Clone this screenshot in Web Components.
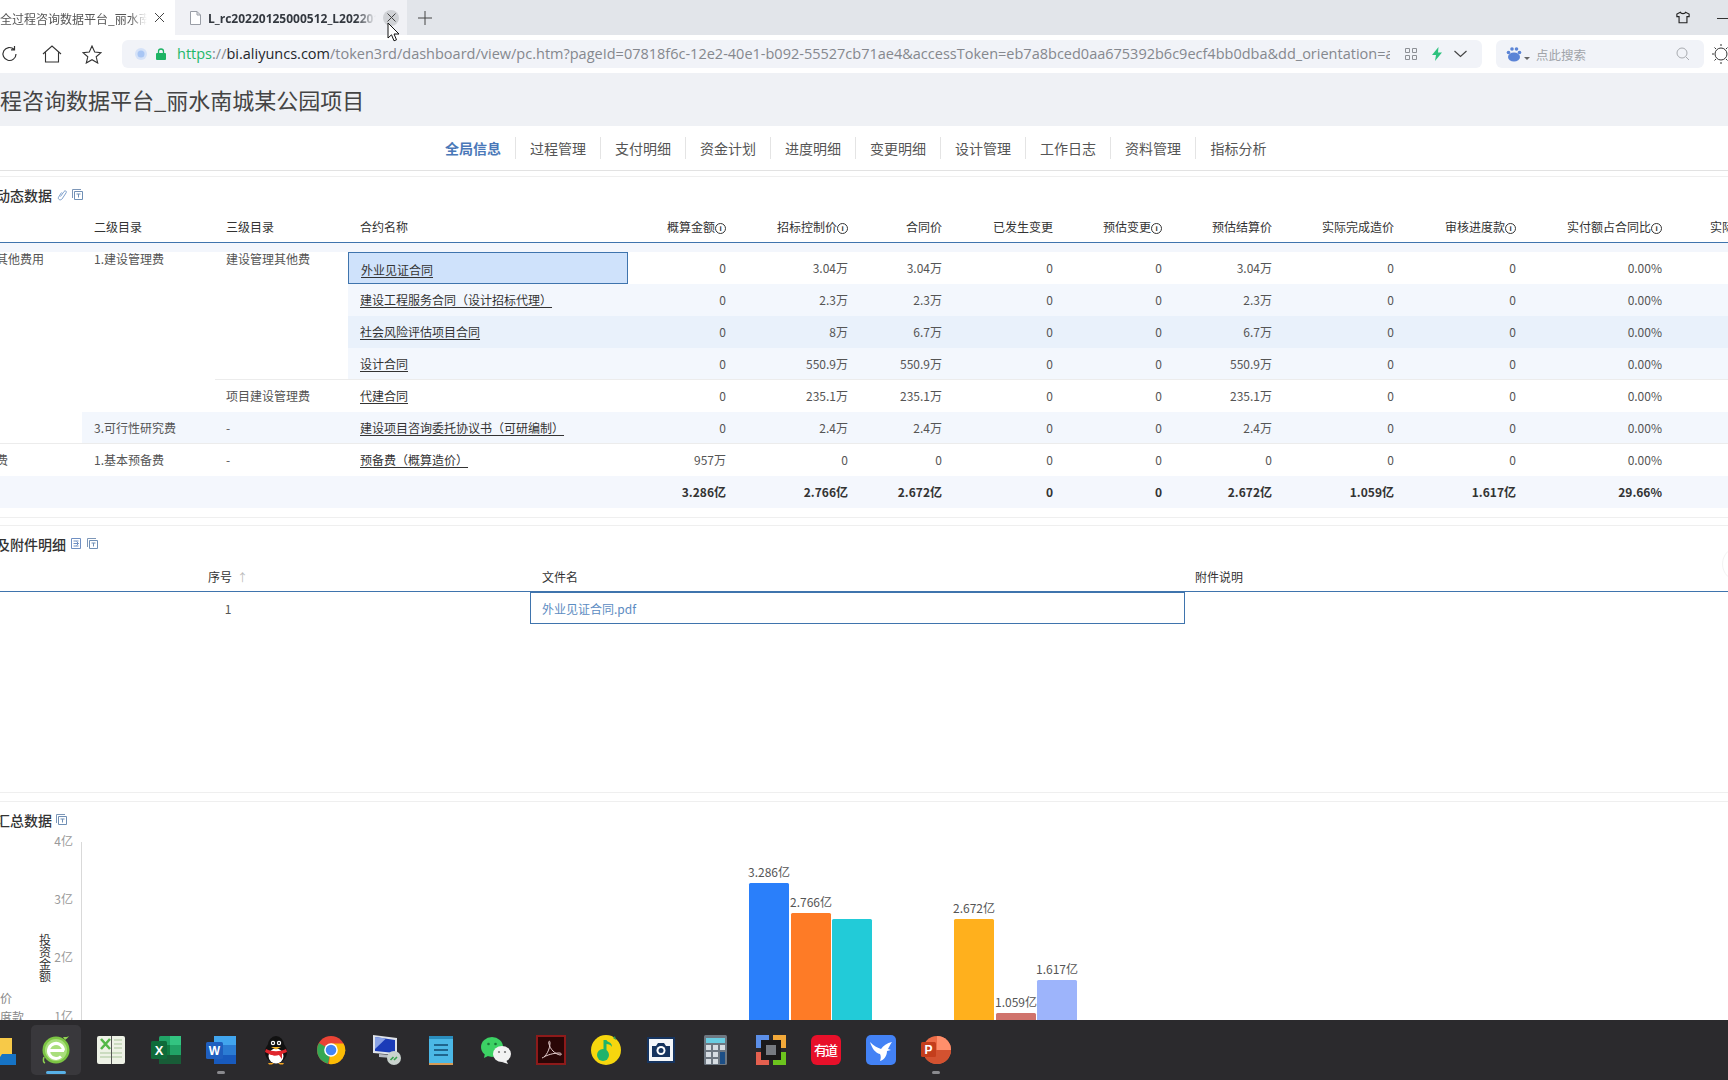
<!DOCTYPE html>
<html lang="zh">
<head>
<meta charset="utf-8">
<title>全过程咨询数据平台_丽水南城某公园项目</title>
<style>
html, body { margin: 0; height: 100%; overflow: hidden; background: #fff; }
body { font-family: "Noto Sans CJK SC", "Noto Sans", sans-serif; }
</style>
</head>
<body>
<desk-top>
    <tab-strip></tab-strip>
    <tool-bar></tool-bar>
    <page-title>程咨询数据平台_丽水南城某公园项目</page-title>
    <nav-tabs></nav-tabs>
    <data-panel height="342" first>
        <panel-head label="动态数据" pad="5" gap="5" icons="link copy"></panel-head>
        <cost-table></cost-table>
    </data-panel>
    <data-panel height="268" top="7">
        <panel-head label="及附件明细" pad="5" gap="6" icons="fold copy"></panel-head>
        <file-table></file-table>
    </data-panel>
    <data-panel height="240" top="8" open>
        <panel-head label="汇总数据" pad="4" gap="6" icons="copy"></panel-head>
        <bar-chart></bar-chart>
    </data-panel>
    <task-bar slot="bottom"></task-bar>
</desk-top>

<script>
const deskTemplate = document.createElement("template");
deskTemplate.innerHTML = `
    <style>
        :host { display: grid; grid-template-rows: 1fr 60px; width: 1728px; height: 1080px; overflow: hidden; }
        .main { overflow: hidden; min-height: 0; }
    </style>
    <div class="main"><slot></slot></div>
    <slot name="bottom"></slot>
`;
class DeskTop extends HTMLElement {
    constructor() {
        super();
        this.attachShadow({ mode: "open" });
        this.shadowRoot.appendChild(deskTemplate.content.cloneNode(true));
    }
}
customElements.define("desk-top", DeskTop);

const tabTemplate = document.createElement("template");
tabTemplate.innerHTML = `
    <style>
        :host { display: flex; height: 35px; background: #e2e5ea; position: relative; font-size: 12px; line-height: 35px; }
        .tab { display: flex; align-items: center; height: 35px; box-sizing: border-box; }
        .one { width: 175px; background: #fff; color: #555; padding-right: 10px; }
        .two { width: 232px; background: #f0f1f5; padding-left: 15px; color: #33383f; font-weight: 700; font-family: "Open Sans", "Noto Sans", sans-serif; }
        .label { flex: 1; overflow: hidden; white-space: nowrap; padding-top: 2px; -webkit-mask-image: linear-gradient(90deg, #000 88%, transparent); mask-image: linear-gradient(90deg, #000 88%, transparent); }
        .one .label { margin-right: 7px; }
        .two .label { margin: 0 7px 0 7px; }
        .x { width: 11px; height: 11px; flex: none; }
        .two .round { width: 16px; height: 16px; border-radius: 50%; background: #d0d2d6; display: flex; align-items: center; justify-content: center; margin-right: 8px; flex: none; }
        .plus { margin-left: 11px; align-self: center; }
        .right { margin-left: auto; display: flex; align-items: center; gap: 27px; }
        .cursor { position: absolute; left: 387px; top: 22px; }
    </style>
    <div class="tab one">
        <span class="label">全过程咨询数据平台_丽水南</span>
        <svg class="x" viewBox="0 0 11 11"><path d="M1 1l9 9M10 1l-9 9" stroke="#444" fill="none"/></svg>
    </div>
    <div class="tab two">
        <svg width="11" height="14" viewBox="0 0 11 14"><path d="M.5.5h6.500l3.500 3.500v9.500h-10zM7 .5v3.500h3.500" fill="#fff" stroke="#9a9ea6"/></svg>
        <span class="label">L_rc20220125000512_L20220125</span>
        <span class="round"><svg width="9" height="9" viewBox="0 0 9 9"><path d="M.5.5l8 8M8.500.5l-8 8" stroke="#444" fill="none"/></svg></span>
    </div>
    <svg class="plus" width="14" height="14" viewBox="0 0 14 14"><path d="M7 0v14M0 7h14" stroke="#444" fill="none"/></svg>
    <div class="right">
        <svg width="14" height="13" viewBox="0 0 16 14"><path d="M5 1L1 3v3h2.500v7h9V6H15V3l-4-2c-.5 2-5.500 2-6 0z" fill="none" stroke="#222" stroke-width="1.300"/></svg>
        <svg width="16" height="14" viewBox="0 0 16 14" style="margin-right:-5px"><path d="M0 7.500h16" stroke="#333"/></svg>
    </div>
    <svg class="cursor" width="13" height="20" viewBox="0 0 13 20"><path d="M1 1v15l3.500-3.200 2.500 6 2.500-1-2.500-5.800H12z" fill="#fff" stroke="#111"/></svg>
`;
class TabStrip extends HTMLElement {
    constructor() {
        super();
        this.attachShadow({ mode: "open" });
        this.shadowRoot.appendChild(tabTemplate.content.cloneNode(true));
    }
}
customElements.define("tab-strip", TabStrip);

const toolTemplate = document.createElement("template");
toolTemplate.innerHTML = `
    <style>
        :host { display: flex; align-items: center; height: 38px; background: #fff; padding: 0 0 0 1px; box-sizing: border-box; }
        .btn { flex: none; display: block; }
        .addr { width: 1360px; height: 28px; margin-left: 20px; background: #f1f3f8; border-radius: 6px; display: flex; align-items: center; padding-left: 13px; box-sizing: border-box; flex: none; }
        .url { width: 1213px; flex: none; overflow: hidden; white-space: nowrap; font: 14.500px/28px "Open Sans", "Noto Sans", sans-serif; color: #85888e; margin-left: 11px; }
        .url b { font-weight: 400; color: #1fb86a; }
        .url i { font-style: normal; color: #23262b; }
        .search { width: 208px; height: 28px; margin-left: 14px; background: #f1f3f8; border-radius: 6px; display: flex; align-items: center; padding-left: 10px; box-sizing: border-box; flex: none; font-size: 12.500px; color: #a0a3a9; }
    </style>
    <svg class="btn" width="18" height="18" viewBox="0 0 18 18"><path d="M15 9a6.500 6.500 0 1 1-2-4.700M13.500 1v3.800H10" fill="none" stroke="#333" stroke-width="1.200"/></svg>
    <svg class="btn" style="margin-left:23px" width="20" height="18" viewBox="0 0 20 18"><path d="M1 9l9-8 9 8M3.500 7.500V17h13V7.500" fill="none" stroke="#333" stroke-width="1.100"/></svg>
    <svg class="btn" style="margin-left:20px" width="20" height="19" viewBox="0 0 20 19"><path d="M10 1l2.700 6 6.300.6-4.800 4.200 1.500 6.200L10 14.700 4.300 18l1.500-6.200L1 7.600 7.300 7z" fill="none" stroke="#333" stroke-width="1.100"/></svg>
    <div class="addr">
        <svg width="12" height="12" viewBox="0 0 12 12"><circle cx="6" cy="6" r="6" fill="#d5e2f8"/><circle cx="6" cy="6" r="3.500" fill="#a9c6f4"/></svg>
        <svg style="margin-left:9px" width="10" height="12" viewBox="0 0 10 12"><path d="M2.500 5V3.500a2.500 2.500 0 0 1 5 0V5" fill="none" stroke="#1db364" stroke-width="1.300"/><rect y="5" width="10" height="7" rx="1" fill="#1db364"/></svg>
        <div class="url"><b>https</b>://<i>bi.aliyuncs.com</i>/token3rd/dashboard/view/pc.htm?pageId=07818f6c-12e2-40e1-b092-55527cb71ae4&amp;accessToken=eb7a8bced0aa675392b6c9ecf4bb0dba&amp;dd_orientation=auto</div>
        <svg style="margin-left:15px" width="12" height="12" viewBox="0 0 12 12"><path d="M.5.500h4v4h-4zM7.500.500h4v4h-4zM.5 7.500h4v4h-4zM7.500 7.500h4v4h-4z" fill="none" stroke="#8d9096"/></svg>
        <svg style="margin-left:15px" width="10" height="14" viewBox="0 0 10 14"><path d="M6.500 0L0 8h4l-1 6 7-8.500H6z" fill="#2ec27e"/></svg>
        <svg style="margin-left:12px" width="13" height="8" viewBox="0 0 13 8"><path d="M.5 1l6 5.500 6-5.500" fill="none" stroke="#444" stroke-width="1.200"/></svg>
    </div>
    <div class="search">
        <svg width="16" height="16" viewBox="0 0 16 16"><g fill="#5b84d6"><ellipse cx="8" cy="11" rx="6" ry="4.500"/><circle cx="2.500" cy="6.500" r="1.800"/><circle cx="6" cy="3" r="1.800"/><circle cx="10.500" cy="3" r="1.800"/><circle cx="13.500" cy="6.500" r="1.800"/></g></svg>
        <svg style="margin-left:2px;margin-top:9px" width="6" height="3" viewBox="0 0 6 3"><path d="M0 0h6L3 3z" fill="#666"/></svg>
        <span style="margin-left:6px;width:140px">点此搜索</span>
        <svg width="14" height="14" viewBox="0 0 14 14"><circle cx="6" cy="6" r="5" fill="none" stroke="#a8abb0"/><path d="M10 10l3 3" stroke="#a8abb0"/></svg>
    </div>
    <svg class="btn" style="margin-left:8px" width="18" height="20" viewBox="0 0 18 20"><circle cx="9" cy="10" r="6" fill="none" stroke="#333"/><path d="M9 0v2M9 18v2M0 10h2M16 10h2M2.500 3.500L4 5M15.500 3.500L14 5M2.500 16.500L4 15M15.500 16.500L14 15" stroke="#333"/></svg>
`;
class ToolBar extends HTMLElement {
    constructor() {
        super();
        this.attachShadow({ mode: "open" });
        this.shadowRoot.appendChild(toolTemplate.content.cloneNode(true));
    }
}
customElements.define("tool-bar", ToolBar);

const titleTemplate = document.createElement("template");
titleTemplate.innerHTML = `
    <style>
        :host { display: block; height: 53px; background: #eff1f5; color: #444; font-size: 22px; line-height: 53px; white-space: nowrap; overflow: hidden; }
    </style>
    <slot></slot>
`;
class PageTitle extends HTMLElement {
    constructor() {
        super();
        this.attachShadow({ mode: "open" });
        this.shadowRoot.appendChild(titleTemplate.content.cloneNode(true));
    }
}
customElements.define("page-title", PageTitle);

const navTemplate = document.createElement("template");
navTemplate.innerHTML = `
    <style>
        :host { display: flex; align-items: center; height: 45px; padding-left: 431px; box-sizing: border-box; border-bottom: 1px solid #e2e2e2; background: #fff; font-size: 14px; color: #555; }
        span { width: 85px; box-sizing: border-box; text-align: center; border-right: 1px solid #e4e4e4; line-height: 22px; flex: none; }
        span:first-of-type { color: #4a78b8; font-weight: 700; }
        span:last-of-type { border: 0; }
    </style>
`;
class NavTabs extends HTMLElement {
    constructor() {
        super();
        this.attachShadow({ mode: "open" });
        this.shadowRoot.appendChild(navTemplate.content.cloneNode(true));
        for (const name of ["全局信息", "过程管理", "支付明细", "资金计划", "进度明细", "变更明细", "设计管理", "工作日志", "资料管理", "指标分析"]) {
            const item = document.createElement("span");
            item.textContent = name;
            this.shadowRoot.appendChild(item);
        }
    }
}
customElements.define("nav-tabs", NavTabs);

const panelTemplate = document.createElement("template");
panelTemplate.innerHTML = `
    <style>
        :host { display: block; box-sizing: border-box; border-top: 1px solid #efefef; border-bottom: 1px solid #efefef; background: #fff; overflow: hidden; }
    </style>
    <slot></slot>
`;
class DataPanel extends HTMLElement {
    constructor() {
        super();
        this.attachShadow({ mode: "open" });
        this.shadowRoot.appendChild(panelTemplate.content.cloneNode(true));
    }
    connectedCallback() {
        this.style.height = this.getAttribute("height") + "px";
        this.style.marginTop = (this.getAttribute("top") || (this.hasAttribute("first") ? 5 : 0)) + "px";
        if (this.hasAttribute("open")) this.style.borderBottom = "0";
    }
}
customElements.define("data-panel", DataPanel);

const panelIcons = {
    link: `<svg width="10" height="12" viewBox="0 0 10 12"><path d="M3.500 7.500L7 2.500c1-1.500 3-.3 2.200 1.200L5 10c-1.300 1.800-4.500.5-3.500-1.700L4.500 3.500" fill="none" stroke="#7d9fcb"/></svg>`,
    copy: `<svg width="11" height="11" viewBox="0 0 11 11"><path d="M.5 9V.5H9" fill="none" stroke="#7d97b8"/><path d="M2.500 2.500h8v8h-8z" fill="none" stroke="#6f8fb5"/><path d="M4.500 5h4M6.500 5v3.500" fill="none" stroke="#6f8fb5"/></svg>`,
    fold: `<svg width="10" height="11" viewBox="0 0 10 11"><path d="M.5.500h9v10h-9zM2.500 5.500h5M5.500 3.500l2 2-2 2M2.500 3h5M2.500 8h5" fill="none" stroke="#6f8fc2"/></svg>`
};
const headTemplate = document.createElement("template");
headTemplate.innerHTML = `
    <style>
        :host { display: flex; align-items: center; height: 36px; padding-bottom: 1px; box-sizing: border-box; font-size: 14px; font-weight: 500; color: #333; white-space: nowrap; }
        #label { margin-left: -4px; }
        .icons { display: flex; align-items: center; }
    </style>
    <span id="label"></span>
    <div class="icons"></div>
`;
class PanelHead extends HTMLElement {
    constructor() {
        super();
        this.attachShadow({ mode: "open" });
        this.shadowRoot.appendChild(headTemplate.content.cloneNode(true));
    }
    connectedCallback() {
        this.shadowRoot.querySelector("#label").textContent = this.getAttribute("label");
        const icons = this.shadowRoot.querySelector(".icons");
        icons.style.marginLeft = this.getAttribute("pad") + "px";
        icons.style.gap = this.getAttribute("gap") + "px";
        icons.innerHTML = this.getAttribute("icons").split(" ").map(n => panelIcons[n]).join("");
    }
}
customElements.define("panel-head", PanelHead);

const tableTemplate = document.createElement("template");
tableTemplate.innerHTML = `
    <style>
        :host { display: block; font-size: 12px; color: #555; white-space: nowrap; }
        .grid { display: grid; grid-template-columns: 82px 133px 133px 280px 110px 122px 94px 111px 109px 110px 122px 122px 146px 60px; }
        .head { height: 29px; border-bottom: 1px solid #3f74ad; box-shadow: 0 1px 0 #8fb0d2; color: #333; }
        .head div { line-height: 27px; padding: 0 12px; box-sizing: border-box; }
        .band { height: 9px; background: #f3f6fc; }
        .rows { grid-template-rows: repeat(8, 32px); }
        .c { padding: 0 12px; box-sizing: border-box; line-height: 32px; min-width: 0; }
        .num { text-align: right; }
        .first { padding-left: 0; margin-left: -4px; }
        .col3 { padding-left: 11px; }
        .span { line-height: 13px; }
        u { color: #333; text-underline-offset: 2px; }
        .i { display: inline-block; width: 11px; height: 11px; border: 1px solid #333; border-radius: 50%; box-sizing: border-box; font: 700 8px/9px "Liberation Sans", sans-serif; text-align: center; vertical-align: 1px; }
        .pale { background: #f3f7fd; }
        .deep { background: #e9f1fb; }
        .line { box-shadow: inset 0 -1px 0 #ececec; }
        .sel { background: #cfe2fb; border: 1px solid #3f74ad; line-height: 32px; padding: 1px 11px 0 12px; }
        .total { font-weight: 700; color: #333; background: #f4f7fd; }
    </style>
    <div class="grid head" id="head"></div>
    <div class="band"></div>
    <div class="grid rows" id="rows"></div>
`;
const costHead = ["", "二级目录", "三级目录", "合约名称", "概算金额*", "招标控制价*", "合同价", "已发生变更", "预估变更*", "预估结算价", "实际完成造价", "审核进度款*", "实付额占合同比*", "实际"];
const costRows = [
    ["外业见证合同", "0", "3.04万", "3.04万", "0", "0", "3.04万", "0", "0", "0.00%"],
    ["建设工程服务合同（设计招标代理）", "0", "2.3万", "2.3万", "0", "0", "2.3万", "0", "0", "0.00%"],
    ["社会风险评估项目合同", "0", "8万", "6.7万", "0", "0", "6.7万", "0", "0", "0.00%"],
    ["设计合同", "0", "550.9万", "550.9万", "0", "0", "550.9万", "0", "0", "0.00%"],
    ["代建合同", "0", "235.1万", "235.1万", "0", "0", "235.1万", "0", "0", "0.00%"],
    ["建设项目咨询委托协议书（可研编制）", "0", "2.4万", "2.4万", "0", "0", "2.4万", "0", "0", "0.00%"],
    ["预备费（概算造价）", "957万", "0", "0", "0", "0", "0", "0", "0", "0.00%"],
    ["", "3.286亿", "2.766亿", "2.672亿", "0", "0", "2.672亿", "1.059亿", "1.617亿", "29.66%"]
];
class CostTable extends HTMLElement {
    constructor() {
        super();
        this.attachShadow({ mode: "open" });
        this.shadowRoot.appendChild(tableTemplate.content.cloneNode(true));
        const head = this.shadowRoot.querySelector("#head");
        costHead.forEach((text, i) => {
            const cell = document.createElement("div");
            const tip = text.endsWith("*");
            cell.textContent = tip ? text.slice(0, -1) : text;
            if (tip) cell.innerHTML += `<span class="i">i</span>`;
            if (i > 3 && i < 13) cell.className = "num";
            if (i === 2) cell.style.paddingLeft = "11px";
            if (i === 13) cell.style.paddingLeft = "36px";
            head.appendChild(cell);
        });
        const rows = this.shadowRoot.querySelector("#rows");
        const add = (text, col, row, cls, span) => {
            const cell = document.createElement("div");
            cell.className = "c " + (cls || "");
            cell.style.gridColumn = col;
            cell.style.gridRow = span ? `${row} / span ${span}` : row;
            if (text) cell.innerHTML = text;
            rows.appendChild(cell);
            return cell;
        };
        add("其他费用", 1, 1, "first span line", 6);
        add("费", 1, 7, "first");
        add("1.建设管理费", 2, 1, "span", 5);
        add("3.可行性研究费", 2, 6, "pale line");
        add("1.基本预备费", 2, 7);
        add("建设管理其他费", 3, 1, "span col3 line", 4);
        add("项目建设管理费", 3, 5, "col3");
        add("-", 3, 6, "col3 pale line");
        add("-", 3, 7, "col3");
        costRows.forEach((values, r) => {
            const row = r + 1;
            let fill = "";
            if (r === 1 || r === 3 || r === 5) fill = "pale";
            if (r === 2) fill = "deep";
            if (r === 7) fill = "total";
            if (r === 3 || r === 5) fill += " line";
            if (r === 7) add("", "1 / 4", row, "total");
            add(values[0] ? `<u>${values[0]}</u>` : "", 4, row, r === 0 ? "sel" : fill);
            values.slice(1).forEach((v, i) => add(v, 5 + i, row, "num " + fill));
            add("", 14, row, fill);
        });
    }
}
customElements.define("cost-table", CostTable);

const fileTemplate = document.createElement("template");
fileTemplate.innerHTML = `
    <style>
        :host { display: block; position: relative; font-size: 12px; color: #555; white-space: nowrap; }
        .grid { display: grid; grid-template-columns: 456px 74px 655px 1fr; }
        .head { height: 30px; line-height: 29px; box-sizing: border-box; color: #333; border-bottom: 1px solid #3f74ad; }
        .head div { padding-left: 12px; }
        .mid { text-align: center; padding: 0 !important; }
        .arrow { color: #bbb; margin-left: 5px; font-size: 11px; }
        .body { grid-template-rows: 32px; line-height: 33px; }
        .link { height: 32px; border: 1px solid #3f74ad; padding-left: 11px; color: #5c8cc2; line-height: 31px; box-sizing: border-box; }
        .handle { position: absolute; left: 1722px; top: -16px; width: 34px; height: 34px; border: 1px solid #f3f3f3; border-radius: 50%; }
    </style>
    <div class="grid head">
        <div class="mid">序号<span class="arrow">↑</span></div><div></div><div>文件名</div><div style="padding-left:10px">附件说明</div>
    </div>
    <div class="grid body">
        <div class="mid">1</div><div></div><div class="link">外业见证合同.pdf</div><div></div>
    </div>
    <div class="handle"></div>
`;
class FileTable extends HTMLElement {
    constructor() {
        super();
        this.attachShadow({ mode: "open" });
        this.shadowRoot.appendChild(fileTemplate.content.cloneNode(true));
    }
}
customElements.define("file-table", FileTable);

const chartTemplate = document.createElement("template");
chartTemplate.innerHTML = `
    <style>
        :host { display: block; height: 202px; }
        svg { display: block; overflow: visible; font-family: "Noto Sans CJK SC", "Noto Sans", sans-serif; font-size: 12px; }
        .tick { fill: #999; text-anchor: end; }
        .val { fill: #555; text-anchor: middle; }
        .side { fill: #888; }
    </style>
    <svg width="1728" height="202" viewBox="0 838 1728 202">
        <path d="M81.500 842V1040" stroke="#d9d9d9" fill="none"/>
        <text class="tick" x="73" y="846">4亿</text>
        <text class="tick" x="73" y="904">3亿</text>
        <text class="tick" x="73" y="962">2亿</text>
        <text class="tick" x="73" y="1021">1亿</text>
        <text x="45" y="934" fill="#333" style="writing-mode:vertical-rl;text-orientation:upright;font-size:12px">投资金额</text>
        <text class="side" x="0" y="1003">价</text>
        <text class="side" x="0" y="1022">度款</text>
        <g id="bars"></g>
    </svg>
`;
class BarChart extends HTMLElement {
    constructor() {
        super();
        this.attachShadow({ mode: "open" });
        this.shadowRoot.appendChild(chartTemplate.content.cloneNode(true));
        const bars = [
            [749, 883, "#2a7ffa", "3.286亿"],
            [791, 913, "#fe7b26", "2.766亿"],
            [832, 919, "#22cbd8", ""],
            [954, 919, "#ffb01d", "2.672亿"],
            [996, 1013, "#d0736c", "1.059亿"],
            [1037, 980, "#9db4fb", "1.617亿"]
        ];
        let out = "";
        for (const [x, y, color, label] of bars) {
            out += `<rect x="${x}" y="${y}" width="40" height="${1040 - y}" rx="1.500" fill="${color}"/>`;
            if (label) out += `<text class="val" x="${x + 20}" y="${y - 6}">${label}</text>`;
        }
        this.shadowRoot.querySelector("#bars").innerHTML = out;
    }
}
customElements.define("bar-chart", BarChart);

const appIcons = {
    folder: `<path d="M0 3h26v27H0z" fill="#f7c948"/><path d="M0 22h14l2-3h14v11H0z" fill="#1673c5"/>`,
    ie: `<circle cx="15" cy="15" r="13.500" fill="#7cc544"/><circle cx="15" cy="15" r="11" fill="#a9de7c"/><path d="M7 15.500h16M22.500 15.500a7.500 7.500 0 1 0-2.500 6" fill="none" stroke="#fff" stroke-width="3"/><path d="M22 2c3 0 5 0 6-1-1 2-3 3-4 4z" fill="#8fd450"/><path d="M3 22c-1 3-1 5 1 6" fill="none" stroke="#8fd450" stroke-width="1.500"/>`,
    book: `<rect x="1" y="1" width="28" height="28" rx="2" fill="#eef2e6"/><path d="M5 4l9 10M14 4L5 14" stroke="#53b848" stroke-width="2.600"/><path d="M4 18h22M4 22h22M18 5h8M18 9h8M18 13h8" stroke="#a9c59a"/><path d="M15.500 1v28" stroke="#555"/>`,
    excel: `<rect x="8" y="1" width="22" height="28" rx="1.500" fill="#21a366"/><rect x="19" y="1" width="11" height="9" fill="#33c481"/><rect x="19" y="10" width="11" height="10" fill="#21a366"/><rect x="8" y="20" width="22" height="9" fill="#185c37"/><rect x="8" y="10" width="11" height="10" fill="#107c41"/><rect y="6" width="16" height="18" rx="1.500" fill="#0f6b3a"/><text x="8" y="20" text-anchor="middle" font-family="Liberation Sans" font-weight="700" font-size="13" fill="#fff">X</text>`,
    word: `<rect x="8" y="1" width="22" height="28" rx="1.500" fill="#2b7cd3"/><rect x="8" y="1" width="22" height="9" fill="#41a5ee"/><rect x="8" y="20" width="22" height="9" fill="#185abd"/><rect y="7" width="17" height="17" rx="1.500" fill="#1f5fbf"/><text x="8.500" y="20" text-anchor="middle" font-family="Liberation Sans" font-weight="700" font-size="12" fill="#fff">W</text>`,
    qq: `<ellipse cx="15" cy="17" rx="11" ry="11" fill="#111"/><ellipse cx="15" cy="10" rx="8" ry="9" fill="#111"/><ellipse cx="15" cy="21" rx="7.500" ry="7.500" fill="#fff"/><circle cx="12" cy="8" r="2.200" fill="#fff"/><circle cx="18" cy="8" r="2.200" fill="#fff"/><circle cx="12" cy="8" r="1" fill="#111"/><circle cx="18" cy="8" r="1" fill="#111"/><path d="M5 14c6 3 14 3 20 0l1 3-5 2v5l-3-4c-3 1-7 1-9-.5L4 17z" fill="#e0262d"/><path d="M10 12h10l-5 2.500z" fill="#f5b324"/><path d="M7 28h6l-2 1.500H8zM17 28h6l-1 1.500h-3z" fill="#f5a623"/>`,
    chrome: `<circle cx="15" cy="15" r="14" fill="#ea4335"/><path d="M15 15L3 8a14 14 0 0 0 9 20.700z" fill="#34a853"/><path d="M15 8.500h12.500A14 14 0 0 1 13 29z" fill="#fbbc05"/><circle cx="15" cy="15" r="6.800" fill="#fff"/><circle cx="15" cy="15" r="5.300" fill="#4285f4"/>`,
    remote: `<path d="M2 0l24 3v17L2 18z" fill="#dfe3ea"/><path d="M4 2l20 3v13L4 16z" fill="#1a3bb8"/><path d="M4 2l11 1.500L4 14z" fill="#89a2e6"/><path d="M8 19l12 1v3l-12-1z" fill="#b7bcc5"/><circle cx="23" cy="23" r="7" fill="#c9d2cd"/><path d="M19.500 25l3-3M23 25l3-3" stroke="#37a14c" stroke-width="1.600"/>`,
    note: `<rect x="3" y="1" width="24" height="28" fill="#4bb8e6"/><path d="M3 1h24v3H3z" fill="#2a8dbd"/><path d="M8 10h14M8 15h14M8 20h14" stroke="#124a70" stroke-width="1.600"/><path d="M3 28h24v2H3z" fill="#d69a55"/>`,
    wechat: `<ellipse cx="11" cy="12" rx="11" ry="10" fill="#3cd264"/><path d="M4 18l-1 5 6-3z" fill="#3cd264"/><ellipse cx="21" cy="19" rx="9" ry="8" fill="#f2f2f2"/><path d="M25 25l2 4-6-2z" fill="#f2f2f2"/><circle cx="7.500" cy="9" r="1.300" fill="#197a37"/><circle cx="14.500" cy="9" r="1.300" fill="#197a37"/><circle cx="18" cy="17" r="1.100" fill="#777"/><circle cx="24" cy="17" r="1.100" fill="#777"/>`,
    pdf: `<rect x="1" y="1" width="28" height="28" fill="#2a0606" stroke="#8e1a1a" stroke-width="2"/><path d="M6 23c4-1 8-9 8-15 0-3-2-2-1 1 1 5 6 10 11 11 2 0 2-2-1-2-5 0-12 2-15 4" fill="none" stroke="#e8d0d0"/>`,
    music: `<circle cx="15" cy="15" r="15" fill="#f6d60e"/><path d="M14 5v14" stroke="#1fb36b" stroke-width="3"/><circle cx="12" cy="20" r="6" fill="#1fb36b"/><path d="M15 5c3 3 6 2 6 7-1-2-3-3-6-3z" fill="#1fb36b"/><path d="M24 1l1 4-3-2z" fill="#2a9d5e"/>`,
    camera: `<rect x="1" y="2" width="28" height="26" fill="#16345f"/><rect x="3" y="4" width="24" height="22" fill="#f5f7fa"/><path d="M6 11h4l2-3h6l2 3h4v11H6z" fill="#16345f"/><circle cx="15" cy="15.500" r="4.500" fill="#fff"/><circle cx="15" cy="15.500" r="2.500" fill="#16345f"/>`,
    calc: `<rect x="3" y="0" width="23" height="30" rx="1.500" fill="#6e7781"/><rect x="5" y="3" width="19" height="5" fill="#69cde2"/><g fill="#d7dde3"><rect x="5" y="10" width="5" height="5"/><rect x="12" y="10" width="5" height="5"/><rect x="19" y="10" width="5" height="5"/><rect x="5" y="17" width="5" height="5"/><rect x="12" y="17" width="5" height="5"/><rect x="5" y="24" width="5" height="5"/><rect x="12" y="24" width="5" height="5"/></g><rect x="19" y="17" width="5" height="12" fill="#1d4f86"/>`,
    grid: `<path d="M0 0h13v5H5v8H0z" fill="#5c8fe8"/><path d="M17 0h13v13h-5V5h-8z" fill="#f3a93a"/><path d="M0 17h5v8h8v5H0z" fill="#e5604f"/><path d="M25 17h5v13H17v-5h8z" fill="#6cc41e"/><rect x="5" y="5" width="20" height="20" fill="#1b1a1c"/><rect x="10" y="10" width="10" height="10" fill="#777b82"/>`,
    youdao: `<rect width="30" height="30" rx="6" fill="#e8102a"/><text x="15" y="20" text-anchor="middle" font-family="Noto Sans CJK SC" font-size="13" font-weight="500" fill="#fff" textLength="24">有道</text>`,
    bird: `<rect width="30" height="30" rx="5" fill="#4382f5"/><path d="M4 7c4 4 8 6 11 7 2-3 6-6 11-7-2 3-3 5-4 7l3 1-4 1c0 5-3 9-7 10 1-3 1-5 0-7C9 18 6 13 4 7z" fill="#fff"/>`,
    ppt: `<circle cx="16" cy="15" r="14" fill="#ed6c47"/><path d="M16 1a14 14 0 0 1 14 14H16z" fill="#ff8f6b"/><path d="M16 15h14a14 14 0 0 1-14 14z" fill="#d35230"/><path d="M2 15A14 14 0 0 0 16 29V15z" fill="#d35230"/><rect y="7" width="15" height="15" rx="1.500" fill="#c43e1c"/><text x="7.500" y="19" text-anchor="middle" font-family="Liberation Sans" font-weight="700" font-size="12" fill="#fff">P</text>`
};
const barTemplate = document.createElement("template");
barTemplate.innerHTML = `
    <style>
        :host { display: flex; align-items: center; height: 60px; background: #2b2a2d; overflow: hidden; }
        .strip { display: flex; margin-left: -27px; flex: none; }
        .slot { width: 55px; height: 50px; flex: none; display: flex; align-items: center; justify-content: center; position: relative; border-radius: 5px; }
        .slot.on { background: #39383c; width: 50px; margin: 0 2.500px; }
        .pip { position: absolute; bottom: 1px; left: 50%; height: 3px; border-radius: 2px; background: #8a8a8e; width: 8px; margin-left: -4px; }
        .on .pip { background: #58b0e6; width: 20px; margin-left: -10px; }
        svg { display: block; }
    </style>
    <div class="strip"></div>
`;
class TaskBar extends HTMLElement {
    constructor() {
        super();
        this.attachShadow({ mode: "open" });
        this.shadowRoot.appendChild(barTemplate.content.cloneNode(true));
        const strip = this.shadowRoot.querySelector(".strip");
        const apps = ["folder", "ie", "book", "excel", "word", "qq", "chrome", "remote", "note", "wechat", "pdf", "music", "camera", "calc", "grid", "youdao", "bird", "ppt"];
        for (const name of apps) {
            const slot = document.createElement("div");
            slot.className = "slot" + (name === "ie" ? " on" : "");
            slot.innerHTML = `<svg width="30" height="30" viewBox="0 0 30 30">${appIcons[name]}</svg>`;
            if (name === "ie" || name === "word" || name === "ppt") slot.innerHTML += `<span class="pip"></span>`;
            strip.appendChild(slot);
        }
    }
}
customElements.define("task-bar", TaskBar);
</script>
</body>
</html>
